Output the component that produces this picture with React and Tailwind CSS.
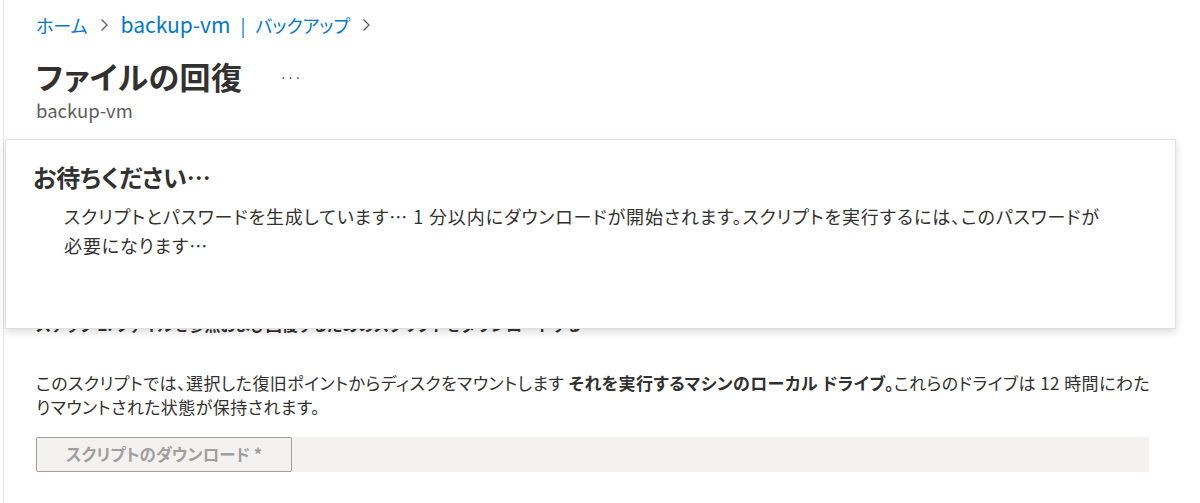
import React from "react";

export default function App() {
  return (
    <div className="relative h-[503px] w-[1200px] overflow-hidden bg-white text-[#323130] [font-family:'Noto_Sans_CJK_JP',sans-serif] [font-feature-settings:'palt']">
      <div className="ml-[3px] h-full border-l border-[#e6e6e6] pl-[32px]">
        {/* breadcrumb */}
        <div className="flex items-center pt-[11px] text-[18px] leading-[26px]">
          <span className="text-[#0078d4]">ホーム</span>
          <ChevronRight className="mx-[12px]" />
          <span className="text-[#0078d4]">
            <span className="text-[21px]">backup-vm</span>
            <span className="mx-[10px]">|</span>バックアップ
          </span>
          <ChevronRight className="ml-[12px]" />
        </div>

        {/* title */}
        <div className="mt-[18px] flex items-center">
          <h1 className="text-[31px] font-semibold leading-[40px] tracking-[0.5px]">ファイルの回復</h1>
          <span className="ml-[37px] mt-[2px] text-[13px] leading-none text-[#323130]">···</span>
        </div>
        <div className="mt-[2px] text-[18.5px] leading-[24px] text-[#605e5c]">backup-vm</div>

        {/* section heading (mostly under the overlay) */}
        <div className="mt-[191px] text-[16px] font-bold leading-[22px]">
          ステップ 2: ファイルを参照および回復するためのスクリプトをダウンロードする
        </div>

        {/* paragraph */}
        <p className="mt-[36px] text-[17px] leading-[24px] tracking-[0.45px]">
          このスクリプトでは、選択した復旧ポイントからディスクをマウントします{" "}
          <span className="font-bold">それを実行するマシンのローカル ドライブ。</span>
          これらのドライブは 12 時間にわた
          <br />
          りマウントされた状態が保持されます。
        </p>

        {/* download row */}
        <div className="mt-[18px] flex w-[1113px] bg-[#f3f2f1]">
          <button className="flex h-[35px] w-[256px] items-center rounded-[2px] border border-[#a19f9d] bg-[#f3f2f1] pl-[29px] text-[16.5px] font-semibold text-[#a19f9d]">
            スクリプトのダウンロード *
          </button>
        </div>
      </div>

      {/* overlay dialog */}
      <div className="absolute left-[5px] top-[139px] h-[190px] w-[1171px] border border-[#e1dfdd] bg-white shadow-[0_3px_8px_rgba(0,0,0,0.14)]">
        <div className="pl-[27px] pt-[22px] text-[24px] font-semibold leading-[30px]">お待ちください…</div>
        <div className="mt-[10px] pl-[58px] text-[18px] leading-[29px] tracking-[0.9px]">
          スクリプトとパスワードを生成しています… 1 分以内にダウンロードが開始されます。スクリプトを実行するには、このパスワードが
          <br />
          必要になります…
        </div>
      </div>
    </div>
  );
}

function ChevronRight({ className = "" }) {
  return (
    <svg className={className} width="9" height="14" viewBox="0 0 9 14" fill="none">
      <path d="M1.5 1.5 L7 7 L1.5 12.5" stroke="#605e5c" strokeWidth="1.3" />
    </svg>
  );
}
